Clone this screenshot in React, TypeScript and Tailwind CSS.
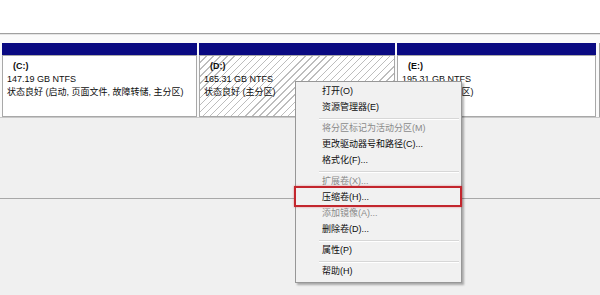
import React from "react";

type Partition = {
  letter: string;
  size: string;
  status: string;
  width: string;
  hatched?: boolean;
};

const partitions: Partition[] = [
  { letter: "(C:)", size: "147.19 GB NTFS", status: "状态良好 (启动, 页面文件, 故障转储, 主分区)", width: "w-[195px]" },
  { letter: "(D:)", size: "165.31 GB NTFS", status: "状态良好 (主分区)", width: "w-[196px]", hatched: true },
  { letter: "(E:)", size: "195.31 GB NTFS", status: "状态良好 (主分区)", width: "w-[199px]" },
];

type MenuEntry = { label: string; disabled?: boolean } | "sep";

const menu: MenuEntry[] = [
  { label: "打开(O)" },
  { label: "资源管理器(E)" },
  "sep",
  { label: "将分区标记为活动分区(M)", disabled: true },
  { label: "更改驱动器号和路径(C)..." },
  { label: "格式化(F)..." },
  "sep",
  { label: "扩展卷(X)...", disabled: true },
  { label: "压缩卷(H)..." },
  { label: "添加镜像(A)...", disabled: true },
  { label: "删除卷(D)..." },
  "sep",
  { label: "属性(P)" },
  "sep",
  { label: "帮助(H)" },
];

const PartitionBox: React.FC<{ p: Partition }> = ({ p }) => (
  <div className={`${p.width} flex flex-col shrink-0`}>
    <div className="h-[12px] bg-[#0a0a82]" />
    <div
      className={`h-[62px] border border-[#a8a8a8] pl-[4px] pt-[4px] leading-[13px] whitespace-nowrap overflow-hidden ${
        p.hatched
          ? "bg-[repeating-linear-gradient(135deg,#ffffff_0px,#ffffff_4px,#bdbdbd_4px,#bdbdbd_5px)]"
          : "bg-white"
      }`}
    >
      <div className="ml-[6px] font-bold">{p.letter}</div>
      <div>{p.size}</div>
      <div>{p.status}</div>
    </div>
  </div>
);

export default function App() {
  return (
    <div className="relative w-[600px] h-[295px] overflow-hidden bg-[#f0f0f0] text-[9px] text-[#0d0d0d] font-['Liberation_Sans','Noto_Sans_CJK_SC',sans-serif]">
      <div className="h-[33px] bg-white" />
      <div className="h-[2px] border-t border-[#a0a0a0] bg-[#e4e4e4]" />
      <div className="flex gap-[2px] pl-[2px] pt-[8px] bg-[#fafafa] border-b border-[#c8c8c8]">
        {partitions.map((p) => (
          <PartitionBox key={p.letter} p={p} />
        ))}
        <div className="ml-[1px] w-[2px] border-l border-[#a0a0a0]" />
      </div>
      <div className="h-[81px] border-b border-[#a8a8a8]" />

      {/* context menu */}
      <div className="absolute left-[295px] top-[81px] w-[167px] border border-[#979797] bg-[#f1f1f1] py-[2px] shadow-[2px_2px_2px_rgba(0,0,0,0.3)]">
        {menu.map((m, i) =>
          m === "sep" ? (
            <div key={i} className="h-[5px] flex items-center pl-[23px] pr-[2px]">
              <div className="h-[2px] w-full border-t border-[#d7d7d7] bg-white" />
            </div>
          ) : (
            <div
              key={i}
              className={`h-[16px] flex items-center pl-[26px] whitespace-nowrap ${
                m.disabled ? "text-[#8a8a8a]" : "text-[#0d0d0d]"
              }`}
            >
              {m.label}
            </div>
          )
        )}
      </div>

      {/* highlight around 压缩卷 */}
      <div className="absolute left-[294px] top-[186px] w-[168px] h-[21px] border-2 border-[#c3262d] shadow-[0_0_2px_rgba(195,38,45,0.5)]" />
    </div>
  );
}
